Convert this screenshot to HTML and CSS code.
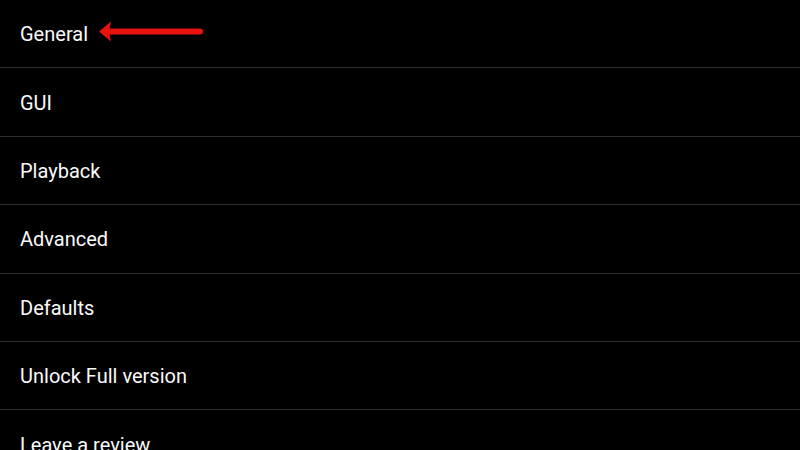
FILE: index.html
```html
<!DOCTYPE html>
<html>
<head>
<meta charset="utf-8">
<link rel="stylesheet" href="styles.css">
</head>
<body>
<ul class="menu">
  <li class="item">General</li>
  <li class="item">GUI</li>
  <li class="item">Playback</li>
  <li class="item">Advanced</li>
  <li class="item">Defaults</li>
  <li class="item">Unlock Full version</li>
  <li class="item">Leave a review</li>
</ul>
<svg class="arrow" width="120" height="30" viewBox="0 0 120 30">
  <path d="M0 13.5 L12 3.5 L10 13.5 L12 23.5 Z" fill="#e8120f"/>
  <line x1="9" y1="13.5" x2="101" y2="13.5" stroke="#e8120f" stroke-width="6" stroke-linecap="round"/>
</svg>
</body>
</html>
```
FILE: styles.css
```css
html, body {
  margin: 0;
  padding: 0;
  background: #000;
  width: 800px;
  height: 450px;
  overflow: hidden;
}
body {
  font-family: Roboto, "Noto Sans", sans-serif;
  color: #fafafa;
  position: relative;
}
.menu {
  list-style: none;
  margin: 0;
  padding: 0;
}
.item {
  box-sizing: border-box;
  height: 68.4px;
  display: flex;
  align-items: center;
  padding: 2.4px 0 0 20px;
  font-size: 20px;
  line-height: 23.44px;
  border-bottom: 1px solid #2e2e2e;
}
.arrow {
  position: absolute;
  left: 99px;
  top: 18px;
}
```
